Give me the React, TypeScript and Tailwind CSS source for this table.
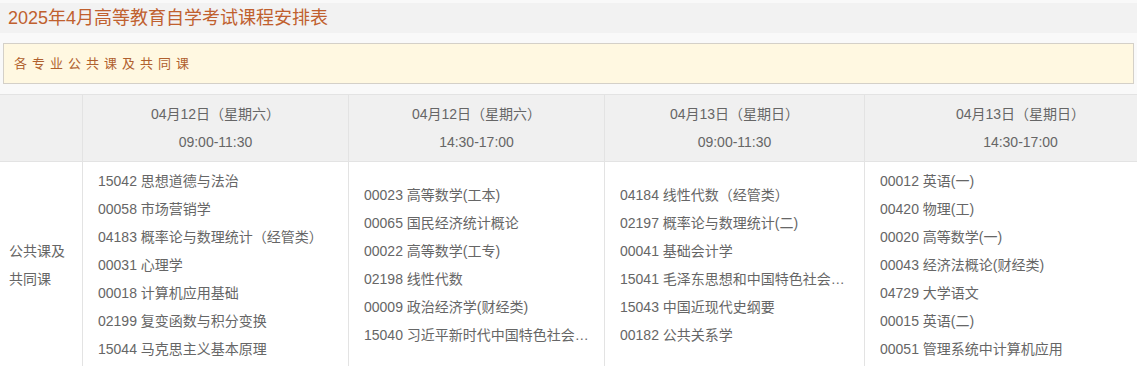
const font = { fontFamily: '"Liberation Sans", "Noto Sans CJK SC", sans-serif' };

const columns = [
  {
    date: '04月12日（星期六）',
    time: '09:00-11:30',
    width: 'w-[266px]',
    items: [
      '15042 思想道德与法治',
      '00058 市场营销学',
      '04183 概率论与数理统计（经管类）',
      '00031 心理学',
      '00018 计算机应用基础',
      '02199 复变函数与积分变换',
      '15044 马克思主义基本原理',
    ],
  },
  {
    date: '04月12日（星期六）',
    time: '14:30-17:00',
    width: 'w-[256px]',
    items: [
      '00023 高等数学(工本)',
      '00065 国民经济统计概论',
      '00022 高等数学(工专)',
      '02198 线性代数',
      '00009 政治经济学(财经类)',
      '15040 习近平新时代中国特色社会主义思想概论',
    ],
  },
  {
    date: '04月13日（星期日）',
    time: '09:00-11:30',
    width: 'w-[260px]',
    items: [
      '04184 线性代数（经管类）',
      '02197 概率论与数理统计(二)',
      '00041 基础会计学',
      '15041 毛泽东思想和中国特色社会主义理论体系概论',
      '15043 中国近现代史纲要',
      '00182 公共关系学',
    ],
  },
  {
    date: '04月13日（星期日）',
    time: '14:30-17:00',
    width: 'w-[311px]',
    items: [
      '00012 英语(一)',
      '00420 物理(工)',
      '00020 高等数学(一)',
      '00043 经济法概论(财经类)',
      '04729 大学语文',
      '00015 英语(二)',
      '00051 管理系统中计算机应用',
    ],
  },
];

export default function App() {
  return (
    <div className="w-[1137px] h-[366px] overflow-hidden bg-[#f9f9f9] pt-[3px]" style={font}>
      <h1 className="h-[30px] bg-[#f2f2f2] px-2 text-[18px] leading-[30px] text-[#c0602e]">
        2025年4月高等教育自学考试课程安排表
      </h1>

      <div className="mx-[3px] mt-[10px] h-[41px] border border-[#d4d0c8] bg-[#fff8e1] px-[10px] text-[13px] leading-[39px] tracking-[5px] text-[#b0602e]">
        各专业公共课及共同课
      </div>

      {/* schedule table, last column runs past the viewport */}
      <div className="mt-[10px] w-[1177px] border-t border-[#e3e3e3]">
        <div className="flex h-[67px] border-b border-[#e3e3e3] bg-[#f0f0f0] text-[14px] text-[#666]">
          <div className="w-[83px] shrink-0 border-r border-[#e3e3e3]" />
          {columns.map((c, i) => (
            <div
              key={i}
              className={`${c.width} ${i < 3 ? 'border-r border-[#e3e3e3]' : ''} shrink-0 flex flex-col items-center justify-center`}
            >
              <div className="leading-[28px]">{c.date}</div>
              <div className="leading-[28px]">{c.time}</div>
            </div>
          ))}
        </div>

        <div className="flex h-[206px] bg-white text-[14px] text-[#666]">
          <div className="w-[83px] shrink-0 border-r border-[#e3e3e3] flex flex-col justify-center px-[9px] leading-[28px]">
            <div>公共课及</div>
            <div>共同课</div>
          </div>
          {columns.map((c, i) => (
            <div
              key={i}
              className={`${c.width} ${i < 3 ? 'border-r border-[#e3e3e3]' : ''} shrink-0 flex flex-col justify-center px-[15px] leading-[28px] min-w-0`}
            >
              {c.items.map((it) => (
                <div key={it} className="truncate">
                  {it}
                </div>
              ))}
            </div>
          ))}
        </div>
      </div>
    </div>
  );
}
